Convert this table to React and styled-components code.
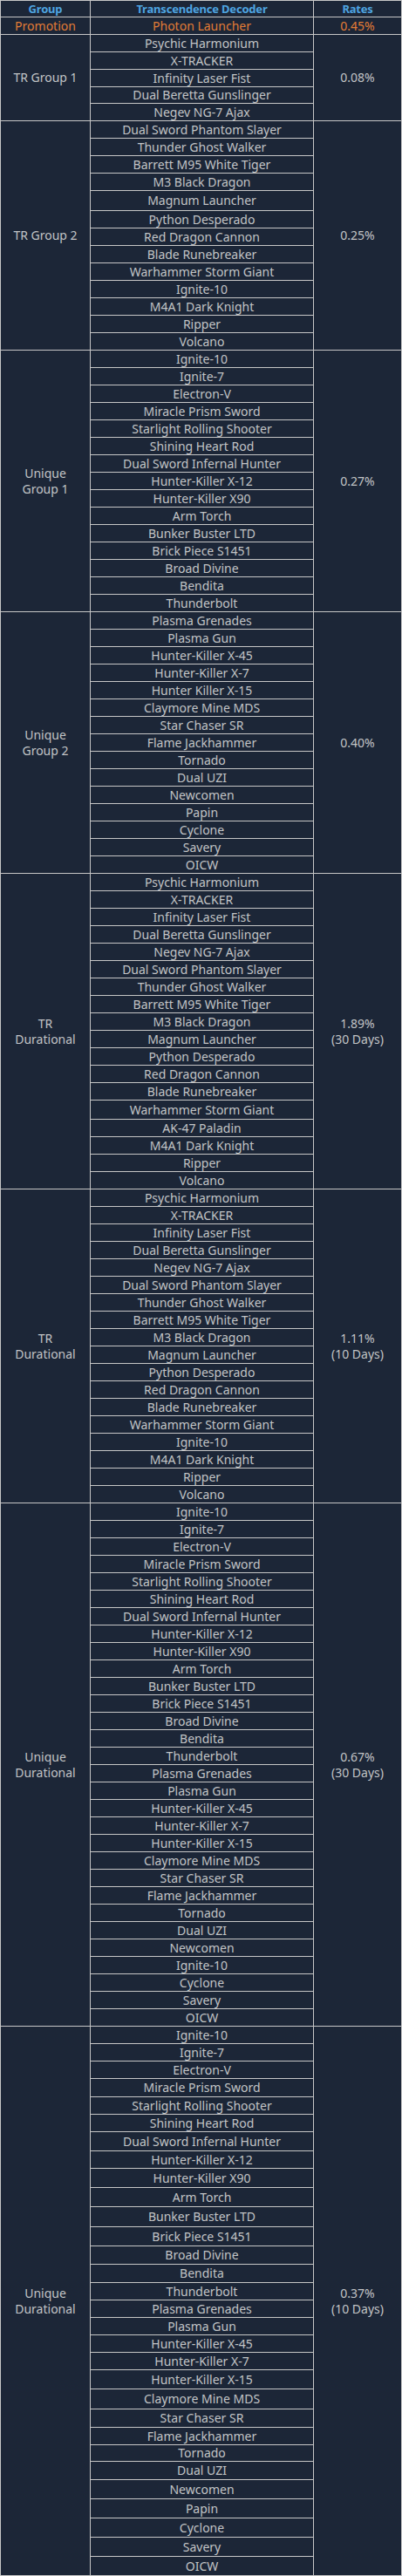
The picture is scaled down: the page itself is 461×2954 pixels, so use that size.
import React from 'react';
import styled, { createGlobalStyle } from 'styled-components';

const GlobalStyle = createGlobalStyle`
  body {
    margin: 0;
    background: #1c2637;
  }
`;

const Table = styled.div`
  display: grid;
  grid-template-columns: 102px 255px 100px;
  gap: 1px;
  width: 461px;
  box-sizing: border-box;
  padding: 1px;
  background: #c6c6c6;
  font-family: 'Noto Sans', 'Open Sans', sans-serif;
  font-size: 14px;
  color: #c2c4c6;
`;

const Cell = styled.div`
  display: flex;
  flex-direction: column;
  align-items: center;
  justify-content: center;
  text-align: center;
  white-space: nowrap;
  line-height: 18px;
  background: #1c2637;
  height: ${p => (p.$h ? `${p.$h}px` : 'auto')};
`;

const HeadCell = styled(Cell)`
  height: 18px;
  color: #4ea4e0;
  font-size: 13px;
  font-weight: bold;
  letter-spacing: -0.2px;
`;

const PromoCell = styled(Cell)`
  height: 19px;
  color: #e27c36;
`;

const GroupCell = styled(Cell)`
  grid-column: 1;
  grid-row: span ${p => p.$span};
`;

const ItemCell = styled(Cell)`
  grid-column: 2;
`;

const RateCell = styled(Cell)`
  grid-column: 3;
  grid-row: span ${p => p.$span};
`;

const trItems = [
  'Dual Sword Phantom Slayer',
  'Thunder Ghost Walker',
  'Barrett M95 White Tiger',
  'M3 Black Dragon',
  'Magnum Launcher',
  'Python Desperado',
  'Red Dragon Cannon',
  'Blade Runebreaker',
  'Warhammer Storm Giant',
];

const trGroup1 = [
  'Psychic Harmonium',
  'X-TRACKER',
  'Infinity Laser Fist',
  'Dual Beretta Gunslinger',
  'Negev NG-7 Ajax',
];

const uniqueA = [
  'Ignite-10',
  'Ignite-7',
  'Electron-V',
  'Miracle Prism Sword',
  'Starlight Rolling Shooter',
  'Shining Heart Rod',
  'Dual Sword Infernal Hunter',
  'Hunter-Killer X-12',
  'Hunter-Killer X90',
  'Arm Torch',
  'Bunker Buster LTD',
  'Brick Piece S1451',
  'Broad Divine',
  'Bendita',
  'Thunderbolt',
];

const uniqueB = (hk15, tail) => [
  'Plasma Grenades',
  'Plasma Gun',
  'Hunter-Killer X-45',
  'Hunter-Killer X-7',
  hk15,
  'Claymore Mine MDS',
  'Star Chaser SR',
  'Flame Jackhammer',
  'Tornado',
  'Dual UZI',
  'Newcomen',
  tail,
  'Cyclone',
  'Savery',
  'OICW',
];

// row pitch is 20px unless listed in `tall` (index -> pitch incl. border)
const groups = [
  { name: ['TR Group 1'], rate: ['0.08%'], items: trGroup1, tall: { 3: 19 } },
  {
    name: ['TR Group 2'],
    rate: ['0.25%'],
    items: [...trItems, 'Ignite-10', 'M4A1 Dark Knight', 'Ripper', 'Volcano'],
    tall: { 4: 23 },
  },
  { name: ['Unique', 'Group 1'], rate: ['0.27%'], items: uniqueA },
  { name: ['Unique', 'Group 2'], rate: ['0.40%'], items: uniqueB('Hunter Killer X-15', 'Papin') },
  {
    name: ['TR', 'Durational'],
    rate: ['1.89%', '(30 Days)'],
    items: [...trGroup1, ...trItems, 'AK-47 Paladin', 'M4A1 Dark Knight', 'Ripper', 'Volcano'],
    tall: { 13: 22 },
  },
  {
    name: ['TR', 'Durational'],
    rate: ['1.11%', '(10 Days)'],
    items: [...trGroup1, ...trItems, 'Ignite-10', 'M4A1 Dark Knight', 'Ripper', 'Volcano'],
  },
  {
    name: ['Unique', 'Durational'],
    rate: ['0.67%', '(30 Days)'],
    items: [...uniqueA, ...uniqueB('Hunter-Killer X-15', 'Ignite-10')],
  },
  {
    name: ['Unique', 'Durational'],
    rate: ['0.37%', '(10 Days)'],
    items: [...uniqueA, ...uniqueB('Hunter-Killer X-15', 'Papin')],
    tall: {
      3: 21, 6: 22, 8: 22, 9: 22, 10: 23, 11: 22, 12: 21, 13: 21,
      19: 22, 20: 23, 21: 21, 23: 19, 24: 21, 25: 22, 26: 22, 27: 22, 28: 22, 29: 22,
    },
  },
];

const Lines = ({ lines }) =>
  lines.map((l, i) => <span key={i}>{l}</span>);

export default function App() {
  return (
    <>
      <GlobalStyle />
      <Table>
        <HeadCell>Group</HeadCell>
        <HeadCell>Transcendence Decoder</HeadCell>
        <HeadCell>Rates</HeadCell>

        <PromoCell>Promotion</PromoCell>
        <PromoCell>Photon Launcher</PromoCell>
        <PromoCell>0.45%</PromoCell>

        {groups.map((g, gi) => {
          const tall = g.tall || {};
          return (
            <React.Fragment key={gi}>
              <GroupCell $span={g.items.length}>
                <Lines lines={g.name} />
              </GroupCell>
              {g.items.map((item, i) => (
                <React.Fragment key={i}>
                  <ItemCell $h={(tall[i] || 20) - 1}>{item}</ItemCell>
                  {i === 0 && (
                    <RateCell $span={g.items.length}>
                      <Lines lines={g.rate} />
                    </RateCell>
                  )}
                </React.Fragment>
              ))}
            </React.Fragment>
          );
        })}
      </Table>
    </>
  );
}
